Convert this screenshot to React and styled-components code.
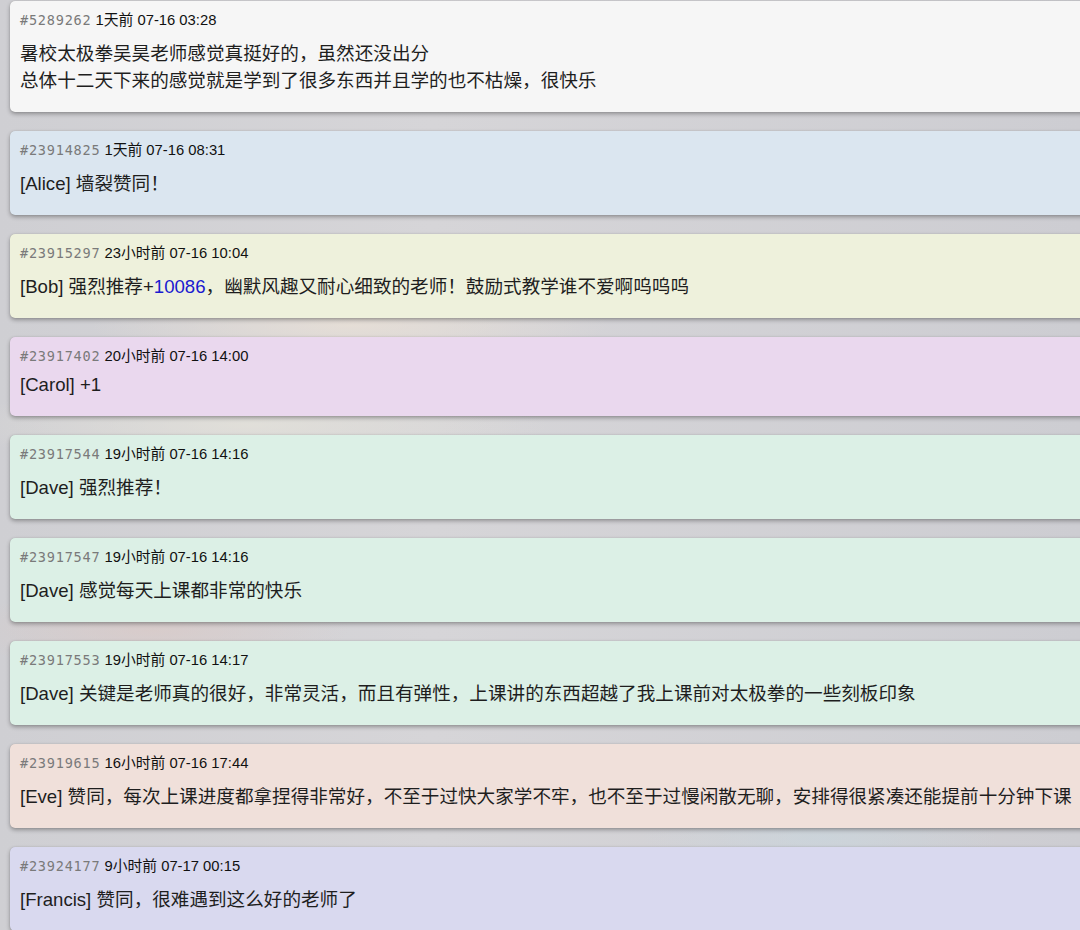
import React from 'react'
import styled, { createGlobalStyle } from 'styled-components'

const posts = [
  {
    id: '5289262', when: '1天前 07-16 03:28', tone: 'plain',
    lines: ['暑校太极拳吴昊老师感觉真挺好的，虽然还没出分', '总体十二天下来的感觉就是学到了很多东西并且学的也不枯燥，很快乐']
  },
  { id: '23914825', when: '1天前 07-16 08:31', tone: 'blue', lines: ['[Alice] 墙裂赞同！'] },
  {
    id: '23915297', when: '23小时前 07-16 10:04', tone: 'olive',
    lines: [['[Bob] 强烈推荐+', { ref: '10086' }, '，幽默风趣又耐心细致的老师！鼓励式教学谁不爱啊呜呜呜']]
  },
  { id: '23917402', when: '20小时前 07-16 14:00', tone: 'pink', lines: ['[Carol] +1'] },
  { id: '23917544', when: '19小时前 07-16 14:16', tone: 'green', lines: ['[Dave] 强烈推荐！'] },
  { id: '23917547', when: '19小时前 07-16 14:16', tone: 'green', lines: ['[Dave] 感觉每天上课都非常的快乐'] },
  {
    id: '23917553', when: '19小时前 07-16 14:17', tone: 'green',
    lines: ['[Dave] 关键是老师真的很好，非常灵活，而且有弹性，上课讲的东西超越了我上课前对太极拳的一些刻板印象']
  },
  {
    id: '23919615', when: '16小时前 07-16 17:44', tone: 'peach',
    lines: ['[Eve] 赞同，每次上课进度都拿捏得非常好，不至于过快大家学不牢，也不至于过慢闲散无聊，安排得很紧凑还能提前十分钟下课']
  },
  { id: '23924177', when: '9小时前 07-17 00:15', tone: 'lavender', lines: ['[Francis] 赞同，很难遇到这么好的老师了'] },
]

const tones = {
  plain: '#f6f6f6',
  blue: '#dbe6f0',
  olive: '#eef1dc',
  pink: '#ead8ee',
  green: '#dcf0e6',
  peach: '#f0e0da',
  lavender: '#d9d9ef',
}

const GlobalStyle = createGlobalStyle`
  html, body {
    margin: 0;
    padding: 0;
    background: #d3d3d6;
    overflow: hidden;
  }
`

const Page = styled.div`
  width: 100%;
  min-height: 100vh;
  box-sizing: border-box;
  padding: 1px 0 0 10px;
  overflow: hidden;

  display: flex;
  flex-direction: column;
  gap: 19px;

  background:
    radial-gradient(ellipse 260px 40px at 350px 325px, rgba(236,226,214,0.7), transparent),
    radial-gradient(ellipse 300px 40px at 250px 425px, rgba(228,226,218,0.8), transparent),
    radial-gradient(ellipse 200px 40px at 150px 630px, rgba(220,200,196,0.6), transparent),
    radial-gradient(ellipse 180px 40px at 820px 838px, rgba(200,214,222,0.6), transparent),
    linear-gradient(90deg, #cfcfd3, #d6d5d8 40%, #cdcdd2);
`

const Card = styled.div`
  margin-right: -12px;
  padding: 10px 10px 20px;
  border-radius: 5px;
  background: ${p => tones[p.$tone]};
  box-shadow: 0 2px 4px rgba(0,0,0,0.32), 0 0 1px rgba(0,0,0,0.2);
`

const Meta = styled.div`
  display: flex;
  align-items: baseline;
  gap: 4px;
  height: 19px;
  line-height: 19px;
`

const PostId = styled.span`
  font-family: "DejaVu Sans Mono", "Liberation Mono", monospace;
  font-size: 13.6px;
  letter-spacing: 0.75px;
  color: #7a7a7a;
`

const When = styled.span`
  font-family: "Liberation Sans", "Noto Sans CJK SC", sans-serif;
  font-size: 14.8px;
  color: #111;
`

const Body = styled.div`
  margin-top: 8px;
  font-family: "Liberation Sans", "Noto Sans CJK SC", sans-serif;
  font-size: 18.6px;
  color: #1e1e1e;
  white-space: nowrap;
`

const Line = styled.div``

const Ref = styled.span`
  color: #1a1ad0;
`

const renderLine = (line) => {
  if (typeof line === 'string') return line
  return line.map((part, i) =>
    typeof part === 'string' ? part : <Ref key={i}>{part.ref}</Ref>
  )
}

const App = () => {
  return (
    <>
      <GlobalStyle />
      <Page>
        {posts.map(post => (
          <Card key={post.id} $tone={post.tone}>
            <Meta>
              <PostId>#{post.id}</PostId>
              <When>{post.when}</When>
            </Meta>
            <Body>
              {post.lines.map((line, i) => (
                <Line key={i}>{renderLine(line)}</Line>
              ))}
            </Body>
          </Card>
        ))}
      </Page>
    </>
  )
}

export default App
